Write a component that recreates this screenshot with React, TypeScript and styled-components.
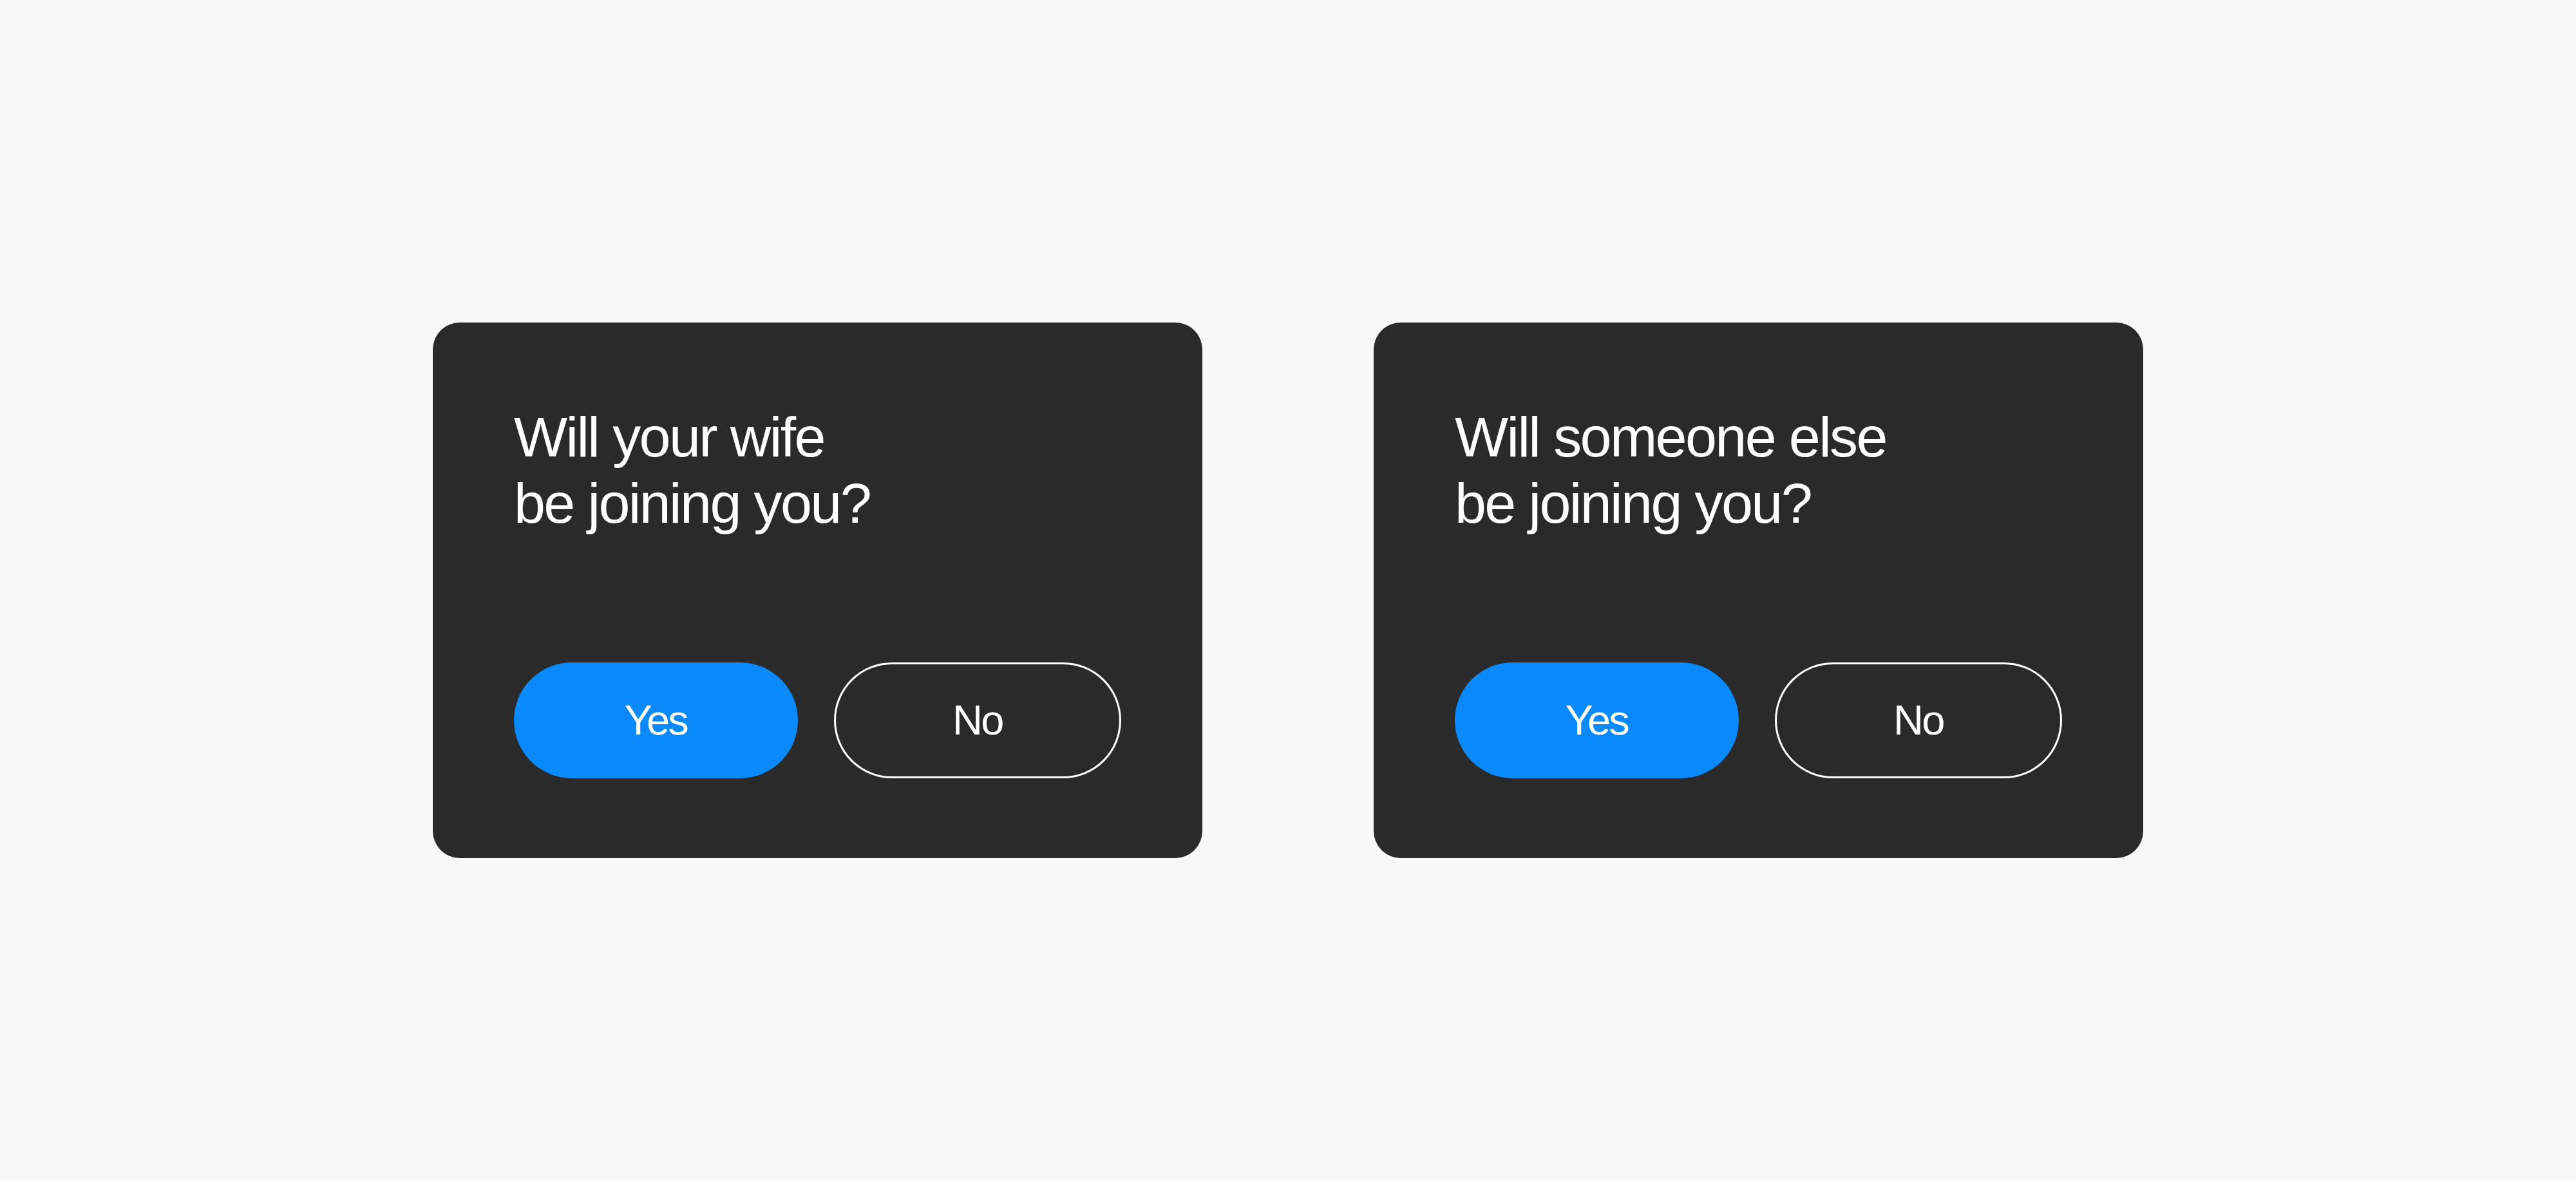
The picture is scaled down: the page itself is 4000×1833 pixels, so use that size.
import React from "react";
import styled, { createGlobalStyle } from "styled-components";

const GlobalStyle = createGlobalStyle`
  html, body {
    margin: 0;
    padding: 0;
    background: #f8f8f8;
  }
  body {
    font-family: "Liberation Sans", Arial, Helvetica, sans-serif;
  }
`;

const Page = styled.main`
  width: 4000px;
  height: 1833px;
  display: flex;
  align-items: center;
  justify-content: center;
  gap: 266px;
  background: #f8f8f8;
`;

const Card = styled.section`
  box-sizing: border-box;
  width: 1195px;
  height: 832px;
  padding: 126px 126px 124px;
  background: #2a2a2a;
  border-radius: 42px;
  display: flex;
  flex-direction: column;
  justify-content: space-between;
`;

const Question = styled.h2`
  margin: 0;
  color: #ffffff;
  font-family: "Liberation Sans", Arial, Helvetica, sans-serif;
  font-weight: 400;
  font-size: 88px;
  line-height: 103px;
  letter-spacing: -2.6px;
`;

const Actions = styled.div`
  display: flex;
  gap: 56px;
`;

const Choice = styled.button<{ $primary?: boolean }>`
  box-sizing: border-box;
  flex: 1;
  height: 180px;
  border-radius: 90px;
  display: flex;
  align-items: center;
  justify-content: center;
  padding: 0;
  cursor: pointer;
  font-family: "Liberation Sans", Arial, Helvetica, sans-serif;
  font-weight: 400;
  font-size: 65px;
  letter-spacing: -2.8px;
  color: #ffffff;
  background: ${(p) => (p.$primary ? "#0a89fb" : "transparent")};
  border: ${(p) => (p.$primary ? "none" : "3px solid #ffffff")};
`;

const questions = [
  ["Will your wife", "be joining you?"],
  ["Will someone else", "be joining you?"],
];

export default function App() {
  return (
    <>
      <GlobalStyle />
      <Page>
        {questions.map(([a, b]) => (
          <Card key={a}>
            <Question>
              {a}
              <br />
              {b}
            </Question>
            <Actions>
              <Choice $primary>Yes</Choice>
              <Choice>No</Choice>
            </Actions>
          </Card>
        ))}
      </Page>
    </>
  );
}
